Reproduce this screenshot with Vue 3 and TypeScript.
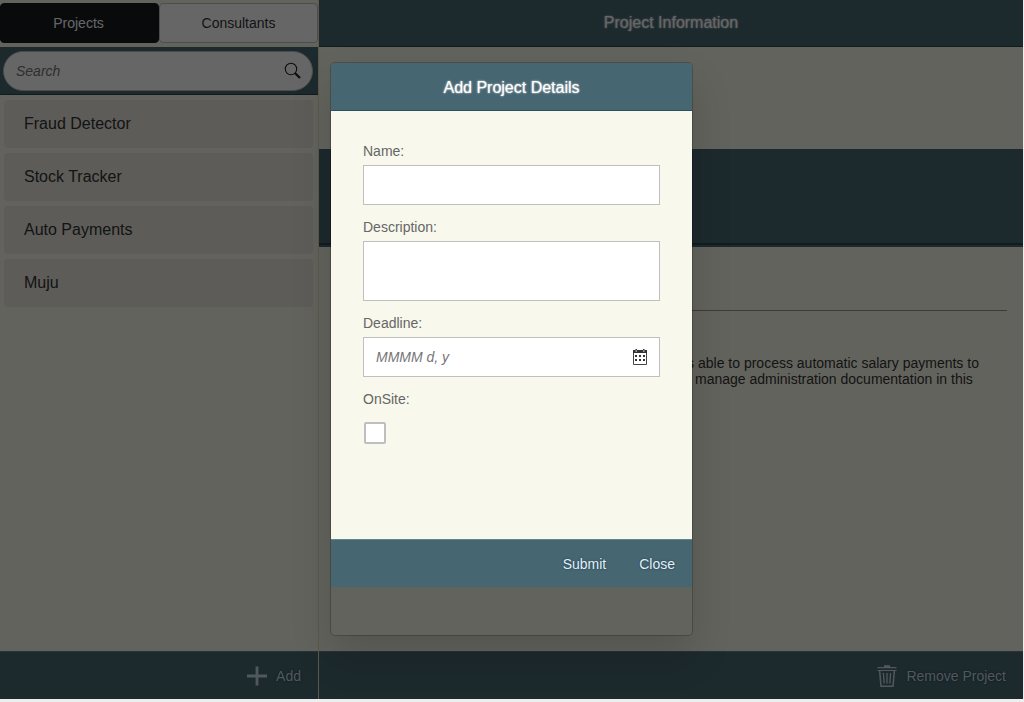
<script setup lang="ts">
import { ref } from 'vue'

const tabs: string[] = ['Projects', 'Consultants']
const activeTab = ref<string>('Projects')
const projects: string[] = ['Fraud Detector', 'Stock Tracker', 'Auto Payments', 'Muju']
const dots: number[][] = [4, 8, 12].flatMap((x) => [7, 11].map((y) => [x, y]))
</script>

<template>
  <div class="screen">
    <div class="app">
      <aside class="master">
        <div class="tabs">
          <button
            v-for="tab in tabs"
            :key="tab"
            class="tab"
            :class="{ active: tab === activeTab }"
            @click="activeTab = tab"
          >{{ tab }}</button>
        </div>
        <div class="search-bar">
          <div class="search">
            <span>Search</span>
            <svg width="18" height="18" viewBox="0 0 18 18" fill="none" stroke="#222">
              <circle cx="7" cy="7" r="5.7" stroke-width="1.1" />
              <path d="M11 11L16 16" stroke-width="2.2" />
            </svg>
          </div>
        </div>
        <ul class="list">
          <li v-for="project in projects" :key="project">{{ project }}</li>
        </ul>
        <footer class="bar foot">
          <svg width="20" height="20" viewBox="0 0 20 20" fill="none" stroke="currentColor" stroke-width="2.8">
            <path d="M10 0.5V19.5M0 10H20" />
          </svg>
          <span>Add</span>
        </footer>
      </aside>
      <main class="detail">
        <header class="bar title">Project Information</header>
        <div class="summary"></div>
        <div class="band"></div>
        <section class="info">
          <div class="rule"></div>
          <p>
            <span class="line first">is able to process automatic salary payments to</span>
            <span class="line second">manage administration documentation in this</span>
          </p>
        </section>
        <footer class="bar foot">
          <svg width="20" height="22" viewBox="0 0 20 22" fill="none" stroke="currentColor">
            <path d="M7 1.2H13" stroke-width="2" />
            <path d="M0.5 2.7H19.5M0.5 5.5H19.5" stroke-width="1.2" />
            <path d="M2.6 5.5L4 21.2H16L17.4 5.5" stroke-width="1.5" />
            <path d="M6.4 8L7.2 18.5M10 8V18.5M13.6 8L12.8 18.5" stroke-width="1.3" />
          </svg>
          <span>Remove Project</span>
        </footer>
      </main>
    </div>
    <div class="overlay"></div>
    <div class="dialog" role="dialog">
      <header class="dialog-title">Add Project Details</header>
      <form class="form" @submit.prevent>
        <label>Name:</label>
        <div class="field"></div>
        <label>Description:</label>
        <div class="field area"></div>
        <label>Deadline:</label>
        <div class="field date">
          <span>MMMM d, y</span>
          <svg width="16" height="16" viewBox="0 0 16 16">
            <path d="M1.5 2V15.5H14.5V2" fill="none" stroke="#444" />
            <path d="M1 1H3.5V0H5V1H11V0H12.5V1H15V4H1Z" fill="#333" />
            <path d="M3.5 2H5M11 2H12.5" stroke="#fff" />
            <rect v-for="([x, y], i) in dots" :key="i" :x="x - 1" :y="y - 1" width="2" height="2" fill="#333" />
          </svg>
        </div>
        <label>OnSite:</label>
        <div class="check"></div>
      </form>
      <footer class="dialog-foot">
        <span>Submit</span>
        <span>Close</span>
      </footer>
    </div>
  </div>
</template>

<style>
body {
  background: #eee;
  overflow: hidden;
}
</style>

<style scoped>
.screen {
  position: relative;
  width: 1024px;
  height: 702px;
  overflow: hidden;
  font: 14px/16px "Liberation Sans", Arial, sans-serif;
  color: #333;
}
.screen * {
  box-sizing: border-box;
}
.app {
  display: flex;
  width: 1023px;
  height: 699px;
  background: #f8f8e8;
}
.master {
  display: flex;
  flex-direction: column;
  width: 319px;
  border-right: 1px solid #e6dfba;
}
.tabs {
  display: flex;
  height: 47px;
  padding: 3px 0 4px;
}
.tab {
  flex: none;
  width: 159px;
  border: 1px solid #bfbfbf;
  border-radius: 4px;
  background: #fff;
  padding: 0;
  font: inherit;
  color: #333;
}
.tab.active {
  padding-right: 2px;
  background: #14191d;
  border-color: #14191d;
  color: #fff;
}
.search-bar {
  height: 48px;
  padding: 4px 5px 4px 3px;
  background: #466672;
  border-bottom: 1px solid #2d4651;
}
.search {
  display: flex;
  align-items: center;
  justify-content: space-between;
  height: 40px;
  padding: 0 10px 0 12px;
  border: 1px solid #bfbfbf;
  border-radius: 20px;
  background: #fff;
  font-style: italic;
  color: #757575;
}
.list {
  flex: 1;
  display: flex;
  flex-direction: column;
  gap: 5px;
  margin: 0;
  padding: 5px 5px 0 4px;
  list-style: none;
}
.list li {
  height: 48px;
  padding-left: 20px;
  border-radius: 4px;
  background: #e8e6dd;
  font-size: 16px;
  line-height: 47px;
}
.bar {
  display: flex;
  align-items: center;
  background: #466672;
}
.foot {
  height: 48px;
  justify-content: flex-end;
  gap: 9px;
  padding: 1px 17px 0 0;
  border-top: 1px solid #5c8389;
  color: #c9dde9;
  text-shadow: 0 0 2px #16333f;
}
.foot span {
  margin-bottom: 1px;
}
.detail {
  flex: 1;
  display: flex;
  flex-direction: column;
}
.title {
  height: 47px;
  justify-content: center;
  border-bottom: 1px solid #2d4651;
  font-size: 16px;
  color: #fff;
  text-shadow: 0 0 2px #fff;
}
.summary {
  height: 102px;
}
.band {
  height: 98px;
  background: linear-gradient(#466672 94px, #2d4651 94px, #2d4651 96px, #466672 96px);
}
.info {
  flex: 1;
  padding: 63px 16px 0;
}
.rule {
  height: 1px;
  background: #a29673;
}
.info p {
  margin: 44px 0 0;
  color: #333;
}
.line {
  display: block;
  white-space: nowrap;
}
.first {
  margin-left: 349px;
}
.second {
  margin-left: 360px;
}
.overlay {
  position: absolute;
  inset: 0 1px 3px 0;
  background: rgba(0, 0, 0, 0.6);
}
.dialog {
  position: absolute;
  left: 331px;
  top: 63px;
  width: 361px;
  height: 572px;
  border-radius: 4px;
  overflow: hidden;
  box-shadow: 0 0 0 1px rgba(0, 0, 0, 0.2), 0 20px 40px rgba(0, 0, 0, 0.15);
}
.dialog-title {
  height: 48px;
  padding-top: 1px;
  background: #466672;
  border-bottom: 1px solid #2d4f60;
  color: #fff;
  font-size: 16px;
  line-height: 48px;
  text-align: center;
  text-shadow: 0 0 2px #fff;
}
.form {
  height: 428px;
  padding: 32px;
  background: #f8f8ec;
}
.form label {
  display: block;
  height: 22px;
  color: #666;
}
.field {
  height: 40px;
  margin-bottom: 14px;
  border: 1px solid #bfbfbf;
  background: #fff;
}
.area {
  height: 60px;
}
.date {
  display: flex;
  align-items: center;
  justify-content: space-between;
  padding: 0 11px 0 12px;
  font-style: italic;
  color: #757575;
}
.check {
  width: 22px;
  height: 22px;
  margin: 9px 0 0 1px;
  border: 2px solid #bfbfbf;
  border-radius: 2px;
  background: #fff;
}
.dialog-foot {
  display: flex;
  align-items: center;
  justify-content: flex-end;
  gap: 33px;
  height: 48px;
  padding: 1px 17px 0 0;
  background: #466672;
  border-top: 1px solid #5c8a8c;
  color: #e2f0fb;
  text-shadow: 0 0 2px #16333f;
}
</style>
